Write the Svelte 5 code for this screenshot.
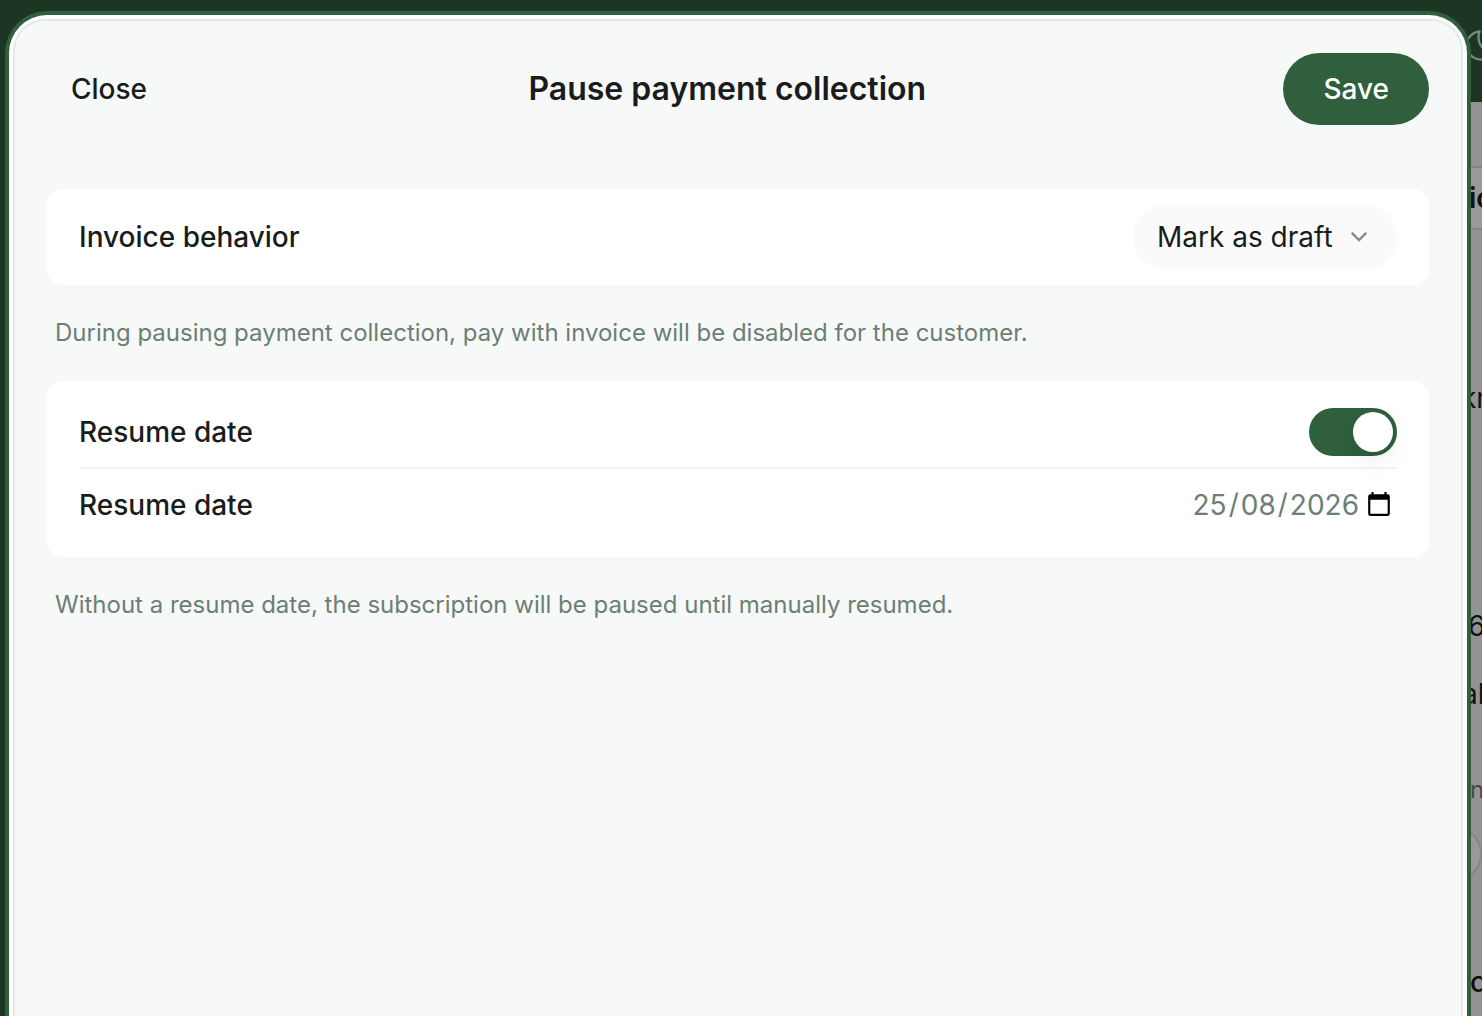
<script lang="ts">
  const behaviors = [
    { value: 'draft', label: 'Mark as draft' }
  ];

  let behavior = $state('draft');
  let resumeEnabled = $state(true);
  let resumeDate = $state('2026-08-25');
</script>

<div class="app">
  <!-- Page under the backdrop -->
  <div class="page" aria-hidden="true">
    <div class="sidebar"></div>
    <div class="topbar">
      <svg class="moon" viewBox="0 0 24 24" fill="none" stroke="currentColor" stroke-width="1.5" stroke-linecap="round" stroke-linejoin="round">
        <path d="M21.75 15A9.700 9.700 0 0 1 18 15.750 9.750 9.750 0 0 1 11 6c0-1.330.270-2.600.750-3.750A9.750 9.750 0 0 0 3 11.250 9.750 9.750 0 0 0 12.750 21a9.750 9.750 0 0 0 9-6Z" />
      </svg>
    </div>
    <div class="content">
      <div class="tabs"><span>ic</span></div>
      <div class="peek name">kn</div>
      <div class="peek count">6</div>
      <div class="peek total">al</div>
      <div class="peek note">n</div>
      <div class="pill"></div>
      <div class="peek last">c</div>
    </div>
  </div>

  <div class="sheet" role="dialog" aria-modal="true" aria-labelledby="sheet-title">
    <form class="sheet-body" onsubmit={(e) => e.preventDefault()}>
      <header class="header">
        <button type="button" class="btn close">Close</button>
        <h1 id="sheet-title">Pause payment collection</h1>
        <button type="submit" class="btn save">Save</button>
      </header>

      <section class="card">
        <div class="row">
          <label for="behavior">Invoice behavior</label>
          <div class="select">
            <select id="behavior" bind:value={behavior}>
              {#each behaviors as item}
                <option value={item.value}>{item.label}</option>
              {/each}
            </select>
            <svg class="chevron" viewBox="0 0 16 10" fill="none" stroke="currentColor" stroke-width="2.4" aria-hidden="true">
              <path d="M0.8 0.8 8 8l7.200-7.200" />
            </svg>
          </div>
        </div>
      </section>
      <p class="help">During pausing payment collection, pay with invoice will be disabled for the customer.</p>

      <section class="card">
        <div class="row divided">
          <label for="resume-toggle">Resume date</label>
          <input id="resume-toggle" class="toggle" type="checkbox" role="switch" bind:checked={resumeEnabled} />
        </div>
        {#if resumeEnabled}
          <div class="row tall">
            <label for="resume-date">Resume date</label>
            <input id="resume-date" class="date" type="date" bind:value={resumeDate} />
          </div>
        {/if}
      </section>
      <p class="help">Without a resume date, the subscription will be paused until manually resumed.</p>
    </form>
  </div>
</div>

<style>
  :global(body) {
    margin: 0;
    overflow: hidden;
  }

  .app {
    --green: #2f5f3c;
    --green-dark: #1c3623;
    --text: #1a1c1b;
    --muted: #6b7f75;
    position: relative;
    display: flex;
    height: 100vh;
    overflow: hidden;
    color: var(--text);
    font-family: Inter, 'Liberation Sans', sans-serif;
    font-size: 28px;
    line-height: 40px;
  }

  /* Page under the backdrop */
  .page {
    position: absolute;
    inset: 0;
    display: grid;
    grid-template-columns: 40px 1fr;
    grid-template-rows: 102px 1fr;
    overflow: hidden;
  }

  .sidebar {
    grid-row: 1 / 3;
    background: var(--green-dark);
  }

  .topbar {
    display: flex;
    align-items: center;
    justify-content: flex-end;
    background: var(--green-dark);
    color: #7c8a80;
  }

  .moon {
    flex-shrink: 0;
    width: 36px;
    height: 36px;
    margin-top: -10px;
    margin-right: -16px;
  }

  .content {
    display: flex;
    flex-direction: column;
    align-items: flex-end;
    padding-top: 64px;
    background: #929493;
    color: #101211;
  }

  .tabs {
    display: flex;
    justify-content: flex-end;
    align-items: center;
    width: 100%;
    height: 60px;
    border: solid #838685;
    border-width: 2px 0;
    background: #999;
    font-weight: 600;
  }

  .tabs span {
    width: 13px;
  }

  .peek {
    width: 12px;
    white-space: nowrap;
  }

  .name {
    width: 21px;
    margin-top: 148px;
  }

  .count {
    width: 14px;
    margin-top: 188px;
  }

  .total {
    width: 20px;
    margin-top: 28px;
  }

  .note {
    width: 12px;
    margin-top: 56px;
    color: #414c46;
    font-size: 24px;
  }

  .pill {
    width: 120px;
    height: 52px;
    margin-top: 16px;
    border: 2px solid #838685;
    border-radius: 28px;
    background: #999;
  }

  .last {
    margin-top: 80px;
    font-weight: 500;
  }

  /* Sheet */
  .sheet {
    position: relative;
    display: flex;
    flex: 1;
    margin: 11px 11px 0 5px;
    padding: 4px 4px 0;
    border: 4px solid var(--green);
    border-bottom: 0;
    border-radius: 42px 42px 0 0;
    background: #fff;
  }

  .sheet-body {
    flex: 1;
    padding: 32px;
    border: 2px solid #e4e9e7;
    border-bottom: 0;
    border-radius: 32px 32px 0 0;
    background: #f7f9f8;
  }

  .header {
    display: flex;
    align-items: center;
    justify-content: space-between;
    margin-bottom: 64px;
  }

  h1 {
    margin: 0;
    font-size: 32px;
    font-weight: 600;
  }

  .btn {
    height: 72px;
    padding: 0 24px;
    border: 0;
    border-radius: 36px;
    background: transparent;
    color: inherit;
    font: inherit;
    font-weight: 500;
    cursor: pointer;
  }

  .save {
    padding: 0 40px;
    background: var(--green);
    color: #fff;
  }

  .card {
    padding: 16px 32px;
    border-radius: 16px;
    background: #fff;
  }

  .row {
    display: flex;
    align-items: center;
    justify-content: space-between;
  }

  .row label {
    font-weight: 500;
  }

  .divided {
    height: 70px;
    border-bottom: 2px solid #f3f5f4;
  }

  .tall {
    height: 72px;
  }

  .help {
    margin: 32px 8px;
    color: var(--muted);
    font-size: 24px;
    line-height: 32px;
  }

  /* Select */
  .select {
    position: relative;
  }

  select {
    display: block;
    height: 64px;
    padding: 0 64px 0 24px;
    border: 0;
    border-radius: 32px;
    appearance: none;
    background: #fafafa;
    color: inherit;
    font: inherit;
  }

  .chevron {
    position: absolute;
    top: 27px;
    right: 30px;
    width: 16px;
    height: 10px;
    color: #8a8a8a;
    pointer-events: none;
  }

  /* Switch */
  .toggle {
    display: flex;
    width: 88px;
    height: 48px;
    margin: 0;
    padding: 4px;
    border-radius: 24px;
    appearance: none;
    background: #dfe4e1;
    cursor: pointer;
  }

  .toggle::before {
    content: '';
    width: 40px;
    height: 40px;
    border-radius: 50%;
    background: #fff;
    box-shadow: 0 8px 24px rgba(0, 0, 0, 0.08);
  }

  .toggle:checked {
    justify-content: flex-end;
    background: var(--green);
  }

  /* Date, always shown day first */
  .date {
    padding: 0 2px 0 0;
    border: 0;
    background: transparent;
    color: var(--muted);
    font: inherit;
  }

  .date::-webkit-datetime-edit {
    display: flex;
    justify-content: flex-end;
  }

  .date::-webkit-datetime-edit-fields-wrapper {
    display: grid;
    grid-template-columns: repeat(5, max-content);
    width: max-content;
  }

  .date::-webkit-datetime-edit-day-field {
    grid-area: 1 / 1;
  }

  .date::-webkit-datetime-edit-month-field {
    grid-area: 1 / 3;
  }

  .date::-webkit-datetime-edit-year-field {
    grid-area: 1 / 5;
  }

  .date::-webkit-datetime-edit-text {
    grid-row: 1;
    padding: 0 1px;
  }

  .date::-webkit-calendar-picker-indicator {
    margin-left: 3px;
  }
</style>
